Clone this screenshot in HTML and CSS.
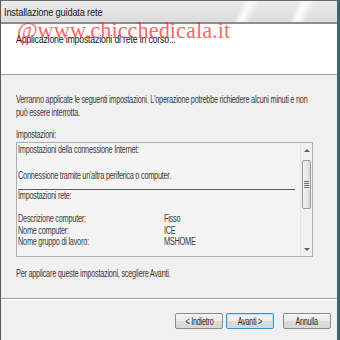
FILE: index.html
```html
<!DOCTYPE html>
<html lang="it">
  <head>
    <meta charset="UTF-8" />
    <title>Installazione guidata rete</title>
    <link rel="stylesheet" href="styles.css">
  </head>
  <body>
    <div class="wizard-window">
      <!-- Title bar -->
      <div class="title-bar">
        <span class="title-text">Installazione guidata rete</span>
      </div>

      <!-- Header -->
      <div class="wizard-header">
        <p class="header-text"><span>Applicazione impostazioni di rete in corso...</span></p>
        <span class="watermark">@www.chicchedicala.it</span>
      </div>

      <!-- Content -->
      <div class="wizard-content">
        <p class="intro">
          <span class="sq">Verranno applicate le seguenti impostazioni. L'operazione potrebbe richiedere alcuni minuti e non</span><br>
          <span class="sq">può essere interrotta.</span>
        </p>
        <p class="box-label"><span class="sq">Impostazioni:</span></p>
        <div class="settings-box">
          <div class="settings-text">
            <div class="line"><span class="sq">Impostazioni della connessione Internet:</span></div>
            <div class="line"></div>
            <div class="line"><span class="sq">Connessione tramite un'altra periferica o computer.</span></div>
            <div class="divider"></div>
            <div class="row"><span class="sq">Impostazioni rete:</span></div>
            <div class="row"></div>
            <div class="row pair"><span class="sq">Descrizione computer:</span><span class="sq">Fisso</span></div>
            <div class="row pair"><span class="sq">Nome computer:</span><span class="sq">ICE</span></div>
            <div class="row pair"><span class="sq">Nome gruppo di lavoro:</span><span class="sq">MSHOME</span></div>
          </div>
          <div class="scrollbar">
            <span class="arrow arrow-up"></span>
            <div class="thumb"><span class="grip"></span></div>
            <span class="arrow arrow-down"></span>
          </div>
        </div>
        <p class="hint"><span class="sq">Per applicare queste impostazioni, scegliere Avanti.</span></p>
      </div>

      <!-- Buttons -->
      <div class="wizard-footer">
        <button class="btn"><span>&lt; Indietro</span></button>
        <button class="btn btn-default"><span>Avanti &gt;</span></button>
        <button class="btn btn-cancel"><span>Annulla</span></button>
      </div>
    </div>
  </body>
</html>
```

FILE: styles.css
```css
/* Global Styles */
body {
  margin: 0;
  padding: 0;
  width: 340px;
  height: 340px;
  overflow: hidden;
  font-family: "Liberation Sans", Arial, sans-serif;
  font-size: 10px;
  color: #1e1e1e;
  background-color: #3d676c; /* teal desktop edge */
}

p {
  margin: 0;
}

/* squeezed text, the screenshot is narrow */
.sq {
  display: inline-block;
  white-space: nowrap;
  letter-spacing: -0.35px;
  transform: scaleX(0.735);
  transform-origin: 0 50%;
}

/* Window frame */
.wizard-window {
  width: 337px;
  height: 340px;
  border-left: 1px solid #5a5a5a;
  border-top: 1px solid #6a6a6a;
  box-sizing: border-box;
  background-color: #f0f0f0;
  display: flex;
  flex-direction: column;
}

/* Title bar */
.title-bar {
  height: 21px;
  display: flex;
  align-items: center;
  padding-left: 3px;
  border-bottom: 2px solid #8c8c8c;
  background:
    linear-gradient(115deg, transparent 70%, rgba(255, 255, 255, 0.9) 72%, transparent 75%, transparent 86%, rgba(255, 255, 255, 0.95) 88%, transparent 91%),
    linear-gradient(180deg, #ebebeb 0%, #dcdcdc 100%);
}

.title-text {
  display: inline-block;
  font-size: 11px;
  color: #1a1a1a;
  letter-spacing: -0.2px;
  white-space: nowrap;
  transform: scaleX(0.84);
  transform-origin: 0 50%;
}

/* Header */
.wizard-header {
  position: relative;
  height: 51px;
  background-color: #ffffff;
  border-bottom: 1px solid #a0a0a0;
  padding: 9px 0 0 15px;
  box-sizing: border-box;
}

.header-text span {
  display: inline-block;
  font-size: 10.5px;
  color: #111111;
  letter-spacing: -0.2px;
  white-space: nowrap;
  transform: scaleX(0.83);
  transform-origin: 0 50%;
}

.watermark {
  position: absolute;
  left: 16px;
  top: -4px;
  font-family: "Liberation Serif", "Times New Roman", serif;
  font-size: 22.4px;
  line-height: 1;
  color: rgba(255, 40, 40, 0.72);
  white-space: nowrap;
}

/* Content */
.wizard-content {
  flex: 1;
  padding: 18px 0 0 15px;
  border-bottom: 1px solid #a0a0a0;
  box-shadow: 0 1px 0 #ffffff;
  color: #3a3a3a;
  overflow: hidden;
}

.intro {
  line-height: 13px;
}

.box-label {
  margin-top: 10px;
  line-height: 12px;
}

/* Settings list */
.settings-box {
  width: 297px;
  height: 115px;
  margin-top: 1px;
  border: 1px solid #abadb3;
  box-sizing: border-box;
  background-color: #f4f4f4;
  display: flex;
}

.settings-text {
  flex: 1;
  min-width: 0;
  padding: 0 5px 0 1px;
}

.line {
  height: 13px;
  line-height: 13px;
}

.divider {
  height: 1px;
  margin: 7px 0 0 0;
  background-color: #5a5a5a;
}

.row {
  height: 11.5px;
  line-height: 11.5px;
}

.pair {
  display: grid;
  grid-template-columns: 146px 1fr;
}

/* Scrollbar */
.scrollbar {
  width: 11px;
  display: flex;
  flex-direction: column;
  align-items: center;
  background-color: #f0f0f0;
  border-left: 1px solid #e6e6e6;
}

.arrow {
  width: 0;
  height: 0;
  border-left: 3px solid transparent;
  border-right: 3px solid transparent;
}

.arrow-up {
  margin-top: 6px;
  border-bottom: 3px solid #606060;
}

.arrow-down {
  margin-top: auto;
  margin-bottom: 5px;
  border-top: 3px solid #606060;
}

.thumb {
  width: 9px;
  height: 49px;
  margin-top: 8px;
  border: 1px solid #9a9a9a;
  border-radius: 2px;
  box-sizing: border-box;
  background: linear-gradient(90deg, #f6f6f6 0%, #dadada 100%);
  display: flex;
  align-items: center;
  justify-content: center;
}

.grip {
  width: 5px;
  height: 7px;
  background: repeating-linear-gradient(180deg, #6c6c6c 0, #6c6c6c 1px, transparent 1px, transparent 2px);
}

.hint {
  margin-top: 11px;
}

/* Footer */
.wizard-footer {
  height: 41px;
  display: flex;
  justify-content: flex-end;
  align-items: flex-start;
  gap: 3px;
  padding: 14px 6px 0 0;
  box-sizing: border-box;
}

.btn {
  width: 48px;
  height: 16px;
  padding: 0;
  display: flex;
  justify-content: center;
  align-items: center;
  font-family: "Liberation Sans", Arial, sans-serif;
  font-size: 10px;
  color: #2a2a2a;
  border: 1px solid #8a8a8a;
  border-radius: 2px;
  background: linear-gradient(180deg, #f4f4f4 0%, #ebebeb 50%, #dcdcdc 51%, #d6d6d6 100%);
}

.btn span {
  white-space: nowrap;
  letter-spacing: -0.3px;
  transform: scaleX(0.72);
}

.btn-default {
  border-color: #3c8fc8;
  box-shadow: inset 0 0 0 1px #bfe3f6;
}

.btn-cancel {
  margin-left: 6px;
}
```
